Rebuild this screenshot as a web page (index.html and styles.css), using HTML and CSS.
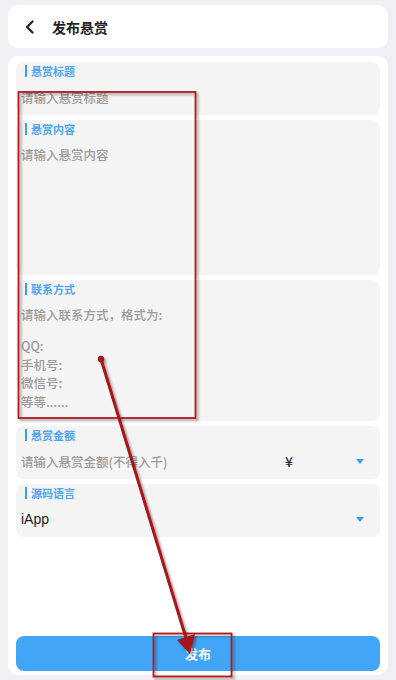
FILE: index.html
```html
<!DOCTYPE html>
<html lang="zh-CN">
<head>
  <meta charset="UTF-8" />
  <meta name="viewport" content="width=device-width, initial-scale=1.0"/>
  <title>发布悬赏</title>
  <link rel="stylesheet" href="styles.css">
</head>
<body>
  <!-- 顶部栏 -->
  <div class="top-bar">
    <svg class="back" width="12" height="14" viewBox="0 0 12 14">
      <path d="M8.5 1.5 L3 7 L8.5 12.5" fill="none" stroke="#222" stroke-width="2.2" stroke-linecap="round" stroke-linejoin="round"/>
    </svg>
    <span class="title">发布悬赏</span>
  </div>

  <!-- 表单 -->
  <div class="card">
    <div class="field field-title">
      <div class="label">悬赏标题</div>
      <div class="input">请输入悬赏标题</div>
    </div>

    <div class="field field-content">
      <div class="label">悬赏内容</div>
      <div class="area">请输入悬赏内容</div>
    </div>

    <div class="field field-contact">
      <div class="label">联系方式</div>
      <div class="area">
        <div>请输入联系方式，格式为:</div>
        <div class="blank"></div>
        <div>QQ:</div>
        <div>手机号:</div>
        <div>微信号:</div>
        <div>等等......</div>
      </div>
    </div>

    <div class="field">
      <div class="label">悬赏金额</div>
      <div class="input row">
        <span class="grow">请输入悬赏金额(不得入千)</span>
        <span class="yen">¥</span>
        <span class="caret"></span>
      </div>
    </div>

    <div class="field">
      <div class="label">源码语言</div>
      <div class="input row">
        <span class="grow value">iApp</span>
        <span class="caret"></span>
      </div>
    </div>

    <button class="submit">发布</button>
  </div>

  <!-- 标注 -->
  <svg class="marks" width="396" height="680" viewBox="0 0 396 680">
    <defs>
      <filter id="shadow" x="-10%" y="-10%" width="130%" height="130%">
        <feDropShadow dx="2" dy="2" stdDeviation="1.2" flood-color="#000" flood-opacity="0.35"/>
      </filter>
    </defs>
    <g filter="url(#shadow)" fill="none" stroke="#b3181d" stroke-width="1.8">
      <rect x="18.5" y="92" width="177" height="326"/>
      <rect x="153.5" y="633.5" width="78" height="43"/>
    </g>
    <g filter="url(#shadow)">
      <line x1="101" y1="359" x2="186" y2="638" stroke="#a8141a" stroke-width="3" stroke-linecap="round"/>
      <circle cx="101" cy="359" r="3.2" fill="#a8141a"/>
      <polygon points="177,640 195,634 190,654" fill="#a8141a"/>
    </g>
  </svg>
</body>
</html>
```

FILE: styles.css
```css
body {
  margin: 0;
  background: #efeff4;
  font-family: "Noto Sans CJK SC", "Noto Sans", sans-serif;
  height: 680px;
  overflow: hidden;
  position: relative;
}

.top-bar {
  margin: 5px 8px 0;
  height: 43px;
  background: #fff;
  border-radius: 10px;
  display: flex;
  align-items: center;
  padding-left: 16px;
}

.back {
  margin-right: 16px;
}

.title {
  font-size: 14px;
  font-weight: bold;
  color: #222;
}

.card {
  margin: 8px 8px 0;
  height: 619px;
  box-sizing: border-box;
  background: #fff;
  border-radius: 10px;
  padding: 6px 8px 4px;
  display: flex;
  flex-direction: column;
  gap: 5px;
}

.field {
  background: #f4f4f4;
  border-radius: 8px;
  padding: 0 6px 0 5px;
}

.label {
  height: 18px;
  line-height: 18px;
  font-size: 11px;
  font-weight: bold;
  color: #4ea6f1;
  padding-left: 10px;
  position: relative;
}

.label::before {
  content: "";
  position: absolute;
  left: 4px;
  top: 3px;
  width: 2px;
  height: 12px;
  background: #3d9ef0;
}

.input {
  height: 35px;
  line-height: 35px;
  font-size: 12.5px;
  font-weight: 500;
  color: #9b9b9b;
}

.row {
  display: flex;
  align-items: center;
}

.grow {
  flex: 1;
}

.value {
  color: #222;
  font-family: "Liberation Sans", sans-serif;
  font-weight: normal;
  font-size: 14px;
}

.yen {
  color: #333;
  font-size: 14px;
  margin-right: 63px;
}

.caret {
  width: 0;
  height: 0;
  border-left: 4.5px solid transparent;
  border-right: 4.5px solid transparent;
  border-top: 5px solid #3d9ef0;
  margin-right: 10px;
}

.area {
  font-size: 12.5px;
  font-weight: 500;
  color: #9b9b9b;
  line-height: 18.8px;
  padding-top: 8px;
}

.field-content {
  height: 155px;
}

.field-contact {
  height: 141px;
}

.blank {
  height: 12px;
}

.submit {
  margin-top: auto;
  height: 35px;
  border: none;
  border-radius: 8px;
  background: #42a5f5;
  color: #fff;
  font-family: "Noto Sans CJK SC", sans-serif;
  font-size: 13px;
  font-weight: bold;
}

/* 标注层 */
.marks {
  position: absolute;
  left: 0;
  top: 0;
  pointer-events: none;
}
```
